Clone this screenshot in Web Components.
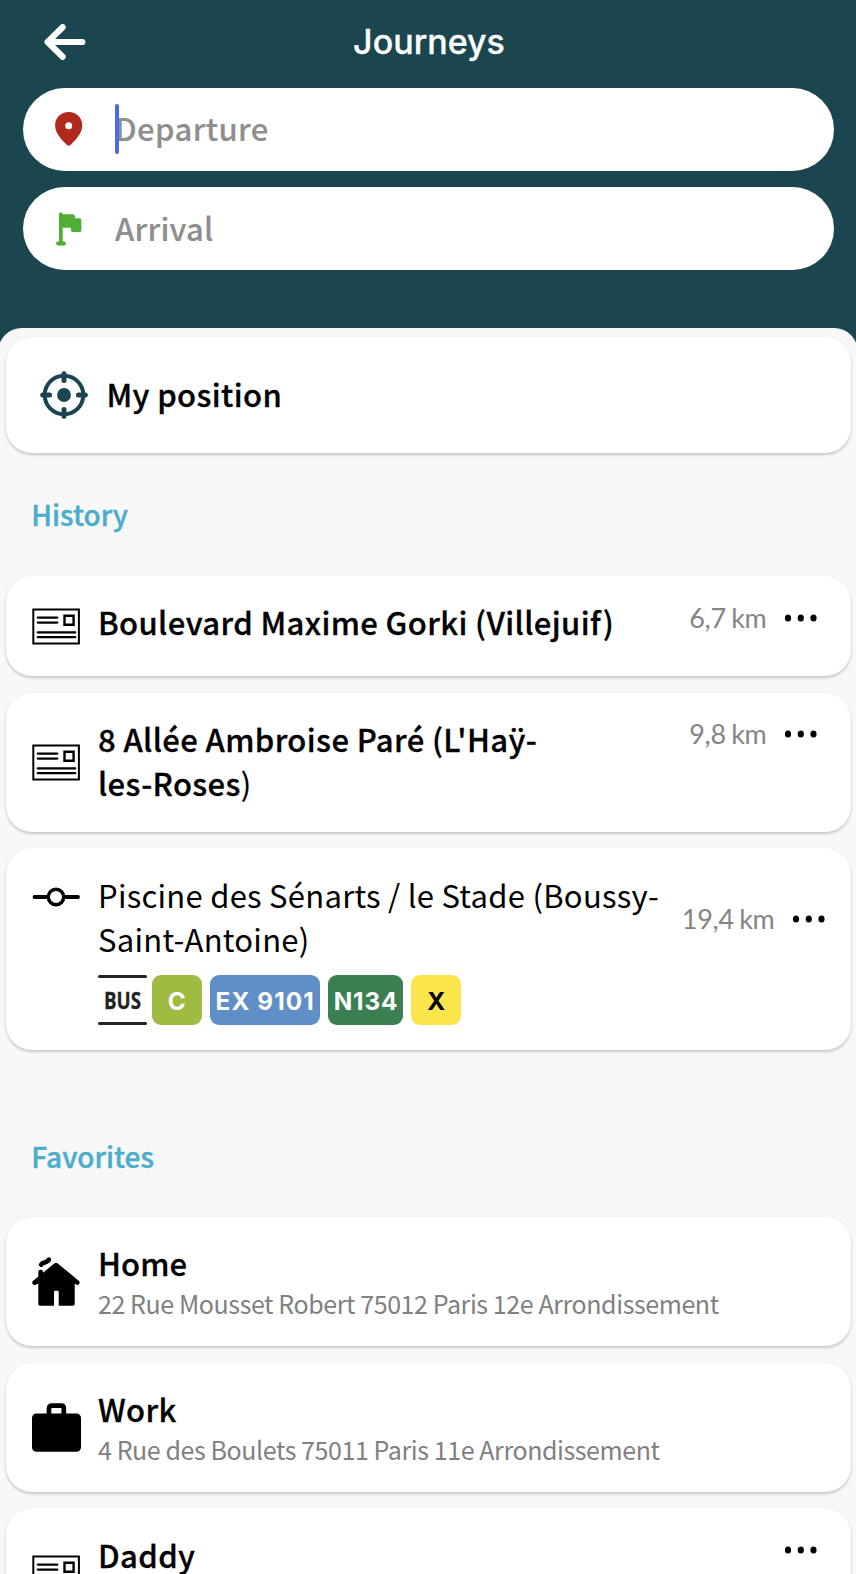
<!DOCTYPE html>
<html lang="en">
<head>
<meta charset="utf-8">
<title>Journeys</title>
<style>
html, body { margin: 0; padding: 0; }
body { width: 856px; height: 1574px; overflow: hidden; background: #1c464f; font-family: "Noto Sans CJK SC", "Noto Sans", sans-serif; color: #000; }
</style>
</head>
<body>
<journey-app></journey-app>
<script>
const ICONS = {
  back: [42, 36, '<path d="M18.600 3.200 3.600 18 18.600 32.800M4 18H38.300" fill="none" stroke="currentColor" stroke-width="6.2" stroke-linecap="round" stroke-linejoin="round"/>'],
  pin: [28, 34, '<path fill="currentColor" fill-rule="evenodd" d="M13.7 0C6 0 .1 5.900 .1 13.300c0 8.200 6.800 14.700 11.900 19.700q1.700 1.500 3.400 0c5.100-5 11.900-11.500 11.900-19.700C27.300 5.900 21.400 0 13.700 0ZM13.700 10.200a3.500 3.500 0 1 1 0 7 3.500 3.500 0 0 1 0-7Z"/>'],
  flag: [26, 34, '<path fill="currentColor" d="M3 1.700a1.900 1.900 0 0 1 3.700 .6H16.800q2 0 2.100 2v2h4.600q1.900 0 1.900 1.900V18.200q0 1.900-1.900 1.900H16.900q-1.900 0-1.900-1.900V15.700H6.700V29.500H8a1.950 1.950 0 0 1 0 3.900H2a1.950 1.950 0 0 1 0-3.900H3Z"/>'],
  target: [48, 48, '<g fill="none" stroke="currentColor"><circle cx="24" cy="24" r="19.300" stroke-width="4"/><path d="M24 2.700V9.600M24 38.400v6.900M2.700 24H9.600M38.400 24h6.900" stroke-width="5" stroke-linecap="round"/></g><circle cx="24" cy="24" r="6.900" fill="currentColor"/>'],
  address: [48, 37, '<g fill="none" stroke="currentColor"><path d="M1.300 1.400H46.900V35.500H1.300Z" stroke-width="2"/><path d="M32.500 7.700h9.100v9h-9.100Z" stroke-width="2.400"/><path d="M5.800 9.600H25.300M5.800 14.600H25.300M5.800 24.400H43.200M5.800 29.200H43.200" stroke-width="2.300" stroke-linecap="round"/></g>'],
  stop: [48, 20, '<g fill="none" stroke="currentColor"><path d="M2.500 10H16M32 10H46" stroke-width="3.800" stroke-linecap="round"/><circle cx="24" cy="10" r="7.700" stroke-width="3.400"/></g>'],
  home: [48, 49, '<path fill="currentColor" d="M22.600 6.200q1.400-1.100 2.800 0L47 23.900a2.400 2.400 0 0 1-2.900 3.700L42.700 26.600V47q0 1.800-1.800 1.800H26.700V34.900q0-1.200-1.200-1.200H23.200q-1.200 0-1.200 1.200V48.800H8.100q-1.800 0-1.800-1.800V26.600L3.900 27.700A2.400 2.400 0 0 1 1 23.900L6.300 19.500V15a2.300 2.300 0 0 1 4.700 0v.7Z"/><path d="M9.200 7.600C10.500 4.600 15.200 6.400 16.800 2.600" fill="none" stroke="currentColor" stroke-width="4.700" stroke-linecap="round"/>'],
  work: [49, 49, '<rect y="10.500" width="49" height="38.300" rx="4.500" fill="currentColor"/><path d="M17 12V5.400Q17 2.700 19.700 2.700H29.100Q31.800 2.700 31.800 5.400V12" fill="none" stroke="currentColor" stroke-width="4.700"/>'],
  more: [34, 8, '<g fill="currentColor"><ellipse cx="4" cy="4" rx="3.100" ry="3.500"/><ellipse cx="16.800" cy="4" rx="3.100" ry="3.500"/><ellipse cx="29.500" cy="4" rx="3.100" ry="3.500"/></g>']
};

function define(name, html, setup) {
  const template = document.createElement('template');
  template.innerHTML = html;
  customElements.define(name, class extends HTMLElement {
    constructor() {
      super();
      this.attachShadow({ mode: 'open' }).append(template.content.cloneNode(true));
    }
    connectedCallback() { if (setup) setup(this, this.shadowRoot); }
  });
}

define('app-icon', '<style>:host{display:block;flex:none}svg{display:block}</style><svg></svg>', (host, root) => {
  const [w, h, body] = ICONS[host.getAttribute('name')];
  const svg = root.querySelector('svg');
  svg.setAttribute('width', w);
  svg.setAttribute('height', h);
  svg.setAttribute('viewBox', `0 0 ${w} ${h}`);
  svg.innerHTML = body;
});

define('app-bar', `<style>
:host { display: grid; grid-template-columns: 88px 1fr 88px; align-items: center; height: 83px; color: #fff; }
app-icon { justify-self: end; margin-right: 2px; }
h1 { margin: 0; text-align: center; font: 500 34px/44px Inter, sans-serif; letter-spacing: 0; padding-left: 2px; -webkit-text-stroke: .3px; }
</style><app-icon name="back"></app-icon><h1><slot></slot></h1>`);

define('search-field', `<style>
:host { display: flex; align-items: center; box-sizing: border-box; height: 82.600px; border-radius: 42px; background: #fff; padding-left: 32px; color: #8e8e8e; }
.icon { width: 60px; flex: none; }
.text { position: relative; font-size: 31px; line-height: 44px; padding-bottom: var(--lift, 2px); -webkit-text-stroke: .15px; font-weight: 500; letter-spacing: var(--ls, 0px); }
.caret { display: none; position: absolute; left: -.500px; top: -2px; width: 4.400px; height: 50px; border-radius: 2px; background: #4c69ec; }
:host([focused]) .caret { display: block; }
</style><div class="icon"><slot name="icon"></slot></div><div class="text"><slot></slot><span class="caret"></span></div>`);

define('section-title', `<style>
:host { display: block; padding-left: 31.300px; font-size: 28px; line-height: 40px; font-weight: 500; color: #4badcc; -webkit-text-stroke: .4px; }
</style><slot></slot>`);

define('list-card', `<style>
:host { display: flex; box-sizing: border-box; height: var(--h); margin: 0 5px 0 6.300px; padding: var(--pt, 24px) 0 0 25.700px; border-radius: 26px; background: #fff; box-shadow: 0 2px 3px rgba(0,0,0,.19), 0 0 3px rgba(0,0,0,.04); }
.icon { flex: none; width: 66px; padding-top: var(--it, 8px); }
.body { flex: none; width: 580px; font-size: 31px; line-height: 43.700px; white-space: nowrap; }
.aside { flex: 1; display: flex; justify-content: flex-end; align-items: center; height: 36px; padding-right: var(--ar, 33px); margin-top: var(--at, 0px); gap: 17.500px; }
</style><div class="icon"><slot name="icon"></slot></div><div class="body"><slot></slot></div><div class="aside"><slot name="aside"></slot></div>`);

define('place-name', `<style>
:host { display: block; font-weight: 500; letter-spacing: var(--ls, .38px); -webkit-text-stroke: .3px; }
:host([plain]) { font-weight: 400; -webkit-text-stroke: 0; }
</style><slot></slot>`);

define('place-address', `<style>
:host { display: block; font-size: 25px; line-height: 37px; color: #808080; letter-spacing: -.41px; }
</style><slot></slot>`);

define('place-distance', `<style>
:host { display: block; font: 400 27px/36px Lato, sans-serif; color: #858585; white-space: nowrap; letter-spacing: -.3px; word-spacing: -1.200px; }
</style><slot></slot>`);

define('line-row', '<style>:host{display:flex;gap:8px;margin-top:14px;height:50px}</style><slot></slot>');

define('bus-mark', `<style>
:host { display: block; box-sizing: border-box; width: 49px; height: 50px; margin-right: -3px; color: #222; text-align: center; font: 700 24px/44px "Open Sans", sans-serif; }
:host::before, :host::after { content: ""; display: block; height: 3px; border-radius: 2px; background: #222; }
span { display: block; transform: scaleX(.78); -webkit-text-stroke: .3px; }
</style><span><slot></slot></span>`);

define('line-badge', `<style>
:host { display: block; width: var(--w, 50px); height: 50px; border-radius: 9px; background: var(--bg); color: var(--fg, #fff); text-align: center; font: 700 24.300px/52px Inter, sans-serif; letter-spacing: var(--ls, .7px); white-space: nowrap; }
</style><slot></slot>`);

define('journey-app', `<style>
:host { display: block; }
.top { height: 328.400px; background: #1c464f; box-sizing: border-box; }
.fields { display: grid; gap: 16.400px; padding: 5.400px 22px 0 23px; }
.sheet { height: 1245.600px; box-sizing: border-box; margin: 0 -2px; padding: 8.600px 2px 0; background: #f8f8f8; border-radius: 24px 24px 0 0; overflow: hidden; }
.stack { display: grid; gap: 16.500px; }
section-title.history { margin: 41px 0 42px; }
section-title.fav { margin: 85.500px 0 41.500px; }
.light { font-weight: 400; -webkit-text-stroke: .2px; }
</style>
<header class="top">
  <app-bar>Journeys</app-bar>
  <div class="fields">
    <search-field focused style="--ls:.4px;--lift:4px"><app-icon slot="icon" name="pin" style="color:#b0291f;margin-top:-1px"></app-icon>Departure</search-field>
    <search-field style="--ls:.25px"><app-icon slot="icon" name="flag" style="color:#50ae35;margin-left:1px"></app-icon>Arrival</search-field>
  </div>
</header>
<main class="sheet">
  <list-card style="--h:116.500px;--pt:34px;--it:0px">
    <app-icon slot="icon" name="target" style="color:#1c464f;margin:.300px 0 0 8.500px"></app-icon>
    <place-name style="margin:1px 0 0 8.500px">My position</place-name>
  </list-card>
  <section-title class="history">History</section-title>
  <div class="stack">
    <list-card style="--h:99.700px;--pt:23.500px">
      <app-icon slot="icon" name="address"></app-icon>
      <place-name>Boulevard Maxime Gorki (Villejuif)</place-name>
      <place-distance slot="aside">6,7 km</place-distance><app-icon slot="aside" name="more"></app-icon>
    </list-card>
    <list-card style="--h:139.300px;--pt:24.700px;--it:26.500px;--at:-1px">
      <app-icon slot="icon" name="address"></app-icon>
      <place-name>8 Allée Ambroise Paré (L'Haÿ-<br>les-Roses<span class="light">)</span></place-name>
      <place-distance slot="aside">9,8 km</place-distance><app-icon slot="aside" name="more"></app-icon>
    </list-card>
    <list-card style="--h:202px;--pt:25px;--it:14px;--at:28px;--ar:25px">
      <app-icon slot="icon" name="stop"></app-icon>
      <place-name plain style="--ls:.27px">Piscine des Sénarts / le Stade (Boussy-<br>Saint-Antoine)</place-name>
      <line-row>
        <bus-mark>BUS</bus-mark>
        <line-badge style="--bg:#9fbb42">C</line-badge>
        <line-badge style="--bg:#608ec6;--w:110.500px;--ls:1.1px">EX 9101</line-badge>
        <line-badge style="--bg:#3a8053;--w:75px;--ls:.9px">N134</line-badge>
        <line-badge style="--bg:#fae54c;--fg:#000">X</line-badge>
      </line-row>
      <place-distance slot="aside">19,4 km</place-distance><app-icon slot="aside" name="more"></app-icon>
    </list-card>
  </div>
  <section-title class="fav">Favorites</section-title>
  <div class="stack">
    <list-card style="--h:129px;--it:16px">
      <app-icon slot="icon" name="home"></app-icon>
      <place-name style="--ls:.1px">Home</place-name>
      <place-address>22 Rue Mousset Robert 75012 Paris 12e Arrondissement</place-address>
    </list-card>
    <list-card style="--h:129px;--it:16px">
      <app-icon slot="icon" name="work"></app-icon>
      <place-name>Work</place-name>
      <place-address>4 Rue des Boulets 75011 Paris 11e Arrondissement</place-address>
    </list-card>
    <list-card style="--h:129px;--it:22.500px">
      <app-icon slot="icon" name="address"></app-icon>
      <place-name style="padding-top:.500px">Daddy</place-name>
      <app-icon slot="aside" name="more"></app-icon>
    </list-card>
  </div>
</main>`);
</script>
</body>
</html>
